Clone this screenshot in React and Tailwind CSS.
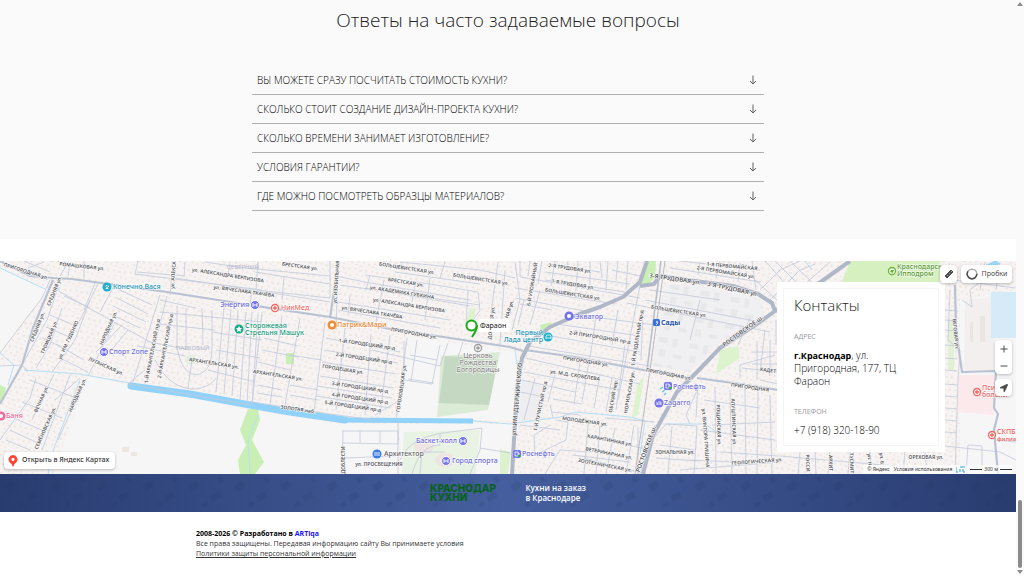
import React, { useState } from 'react';
import { FaLocationArrow } from 'react-icons/fa';

const QUESTIONS = [
  'Вы можете сразу посчитать стоимость кухни?',
  'Сколько стоит создание дизайн-проекта кухни?',
  'Сколько времени занимает изготовление?',
  'Условия гарантии?',
  'Где можно посмотреть образцы материалов?',
];

// thin residential streets
const STREETS = [
  // west
  'M0 353 42 298 50 280M0 366 22 365 28 372M53 280 60 292 150 342 190 350M58 288 47 320 22 365M84 310 95 283M100 312 115 284 122 292M120 290 152 305M117 298 148 314M113 306 146 322M110 314 140 328M90 300 75 340 52 372M62 308 50 345 36 368M98 284 80 320 66 340M64 296 90 308M50 315 76 326M46 327 72 338M42 338 68 350M115 322 88 376M122 325 96 352M128 330 110 352M56 344 84 360M60 358 88 372M36 378 30 398 0 440M30 380 76 398M54 374 32 420M70 375 42 450M80 378 55 400M22 402 62 418M14 418 46 432M10 430 40 444M6 440 30 450M84 382 58 440',
  'M133 382 160 295M145 384 167 296M137 346 185 356M160 300 196 308M177 306 177 348Q183 378 200 374Q212 370 212 348L212 310M186 308 186 350M202 308 203 345M158 324 215 330M192 360 188 388M155 360Q170 390 196 389Q212 386 216 378M145 370 128 384 250 405M224 308 216 392M231 309 224 394M238 310 232 396M246 312 240 400M252 312 247 404M258 314 252 405M160 312 262 322M212 332 262 340M216 350 260 358M208 370 255 382',
  // north west
  'M84 261 84 278M138 261 135 274 262 290M137 272 185 276M173 261 170 295M175 278 330 302M185 262 184 276M205 262 245 268 330 276M200 270 246 276M230 264 228 274M252 290 250 305M258 262 256 290 330 298M284 276 282 300M255 272 330 284M60 276 66 266 58 261M24 261 50 272M28 268 44 262M70 262 68 276',
  // block with Городецкие
  'M262 312 252 404M282 316 270 405M300 318 285 405M325 322 314 412M345 328 336 410M371 334 365 415M390 335 380 415M407 338 396 420M265 326 300 334M264 338 298 346M290 355 322 360M262 350 298 357M258 362 290 370M258 385 282 390M257 393 282 397M290 385 318 390M290 395 318 400M326 338 400 352M324 350 398 363M322 362 396 374M320 376 394 388M318 386 392 398M316 396 390 408M375 415 400 400M372 350 440 366 448 343M404 341 404 380 432 384 440 345M410 355 437 360M411 382 417 340M252 402 330 414 375 420M408 379 434 383',
  // north centre
  'M330 298 330 261M338 261 336 330M336 276 365 282 470 300M370 275 366 290M365 275 430 284 478 292M350 295 348 315M338 302 450 320M384 280 380 302M430 278 425 320M365 288 470 306M338 310 440 328M380 300 376 322M468 291 466 325 488 328M478 292 480 310 466 330M400 262 480 270 515 278M395 272 480 284M498 262 490 320M505 270 500 345M340 285 480 305M415 284 412 302M445 262 440 278M463 342 458 357M515 262 520 300 512 330',
  // north east of centre
  'M520 261 520 277 640 298M530 261 528 276M542 261 538 284M555 261 551 286M568 261 566 270M578 261 576 290M590 261 590 290M600 261 602 278M548 264 600 272M545 272 630 284M545 280 625 292M515 288 615 304M515 298 590 312M524 300 518 325M540 290 530 325M520 304 552 310M514 332 545 336M608 261 606 290M618 261 616 280M628 261 626 290M612 270 640 276',
  // Пригородный quarter
  'M556 324 640 336M596 316 592 345 582 402M540 334 640 352M528 346 650 366M618 310 612 345M525 358 640 384M524 372 620 390M555 374 548 402M580 362 574 404M600 374 594 408M522 380 575 392M520 392 540 396M535 378 524 420M625 345 616 410M612 378 606 412M553 399 582 404M552 412 580 415M645 300 760 322M643 310 641 360M627 303 770 332M593 317 655 325M640 285 618 400M650 290 720 300M700 300 690 340M556 420 568 422 566 440 535 455 534 435 550 425M553 418 550 405M520 425 560 430',
  // south centre
  'M588 424 584 474M588 436 650 450M584 458 646 474M600 425 596 474M615 428 606 474M545 474 560 450 588 452M634 425 626 474M572 455 630 462M655 425 640 474M512 450 545 455M605 418 655 422M638 427 638 474',
  'M652 440 666 424 697 426 694 474M672 426 668 474M690 424 686 415 700 384M660 445 695 450M656 458 698 461M698 385 696 418M715 387 716 474M730 390 732 474M745 388 746 474M758 392 757 474M704 400 760 408M700 430 775 440M712 425 775 422M720 452 778 456M680 470 780 462M740 378 740 365 775 355M765 330 760 372M742 368 778 372M770 395 772 474M776 320 776 345M690 460 735 462',
  // north east
  'M670 268 760 282M680 261 760 270M700 262 698 275M720 261 716 278M740 263 738 282M752 261 756 290M765 261 800 300M775 261 808 294M790 261 815 285M760 290 780 270 800 261M770 300 800 270 815 264M780 306 830 262M755 280 790 312M750 318 738 345M757 342 757 380M770 340 770 376M752 352 778 352M752 364 778 364M760 380 778 384',
  // east
  'M950 290 948 340 960 350 958 380 955 474M962 300 972 307 970 290 985 278M945 310 958 311M945 320 957 321M945 330 957 331M945 345 957 346M945 358 957 359M945 370 957 371M945 384 957 385M945 396 957 397M945 408 957 409M945 420 957 421M945 432 957 433M955 280 1015 288M985 262 980 290M1000 262 996 290M966 474 968 445 982 446 982 474M995 440 1016 442M780 456 940 470M800 452 798 474M815 452 816 474M830 452 828 474M850 452 848 474M870 452 872 474M905 452 903 474M925 452 927 474M945 446 1000 452 1016 460',
  // sport park
  'M343 430 342 474M343 431 398 431 398 444 343 443M360 431 360 443M380 431 380 443M398 422 398 474M400 460Q410 436 450 432L482 428 480 450 470 474M345 458 395 456M440 434 440 445Q420 445 412 474M480 448 510 453M420 474 422 452 445 452',
];

const AVENUES = [
  'M0 261 30 276 53 278 72 279 167 292 250 305 330 317 390 329 450 338 510 347 523 351',
  'M53 280 33 328 22 365 0 404',
  'M338 261 336 278 330 318',
  'M697 378 740 384 778 390',
  'M955 285 956 330 962 372 996 371 994 408 998 414 994 430 998 474',
  'M525 350 575 357 643 370 690 378',
];

const HIGHWAYS = [
  'M512 474 517 388 522 358 530 342 550 327 577 315 600 307 623 297 640 282 647 261',
  'M643 474 653 435 677 392 697 372 720 348 760 322 775 311 772 303 758 294 733 286 687 280 660 276 654 284 640 286',
  'M775 311 795 298 822 281 850 261',
];

// text, centre x, centre y, angle
const STREET_NAMES = [
  ['ПРИГОРОДНАЯ ул.', 26, 271, 17],
  ['РОМАШКОВАЯ ул.', 82, 266, 6],
  ['СРЕДНЯЯ ул.', 54, 291, -68],
  ['СРЕДНЯЯ ул.', 37, 327, -68],
  ['ТРОИЦКАЯ ул.', 49, 337, -67],
  ['ул. ИМ. ГУДЕНКО', 68, 340, -65],
  ['НАРОДНАЯ ул.', 108, 328, -66],
  ['НАРОДНАЯ ул.', 77, 395, -66],
  ['ВЕЧНАЯ ул.', 41, 399, -66],
  ['СЕМЁНОВСКАЯ ул.', 45, 428, -66],
  ['ЛУГАНСКАЯ ул.', 106, 366, 24],
  ['1-Й АРХАНГЕЛЬСКИЙ пр-д', 152, 351, -79],
  ['2-Й АРХАНГЕЛЬСКИЙ пр-д', 165, 346, -79],
  ['АРХАНГЕЛЬСКАЯ ул.', 214, 363, 9],
  ['АРХАНГЕЛЬСКАЯ ул.', 278, 375, 9],
  ['ул. АЛЕКСАНДРА БЕРЛИЗОВА', 228, 275, 9],
  ['ул. ВЯЧЕСЛАВА ТКАЧЁВА', 244, 291, 8],
  ['ул. АЛЕКСА', 173, 275, -86],
  ['БРЕСТСКАЯ ул.', 300, 266, 8],
  ['ул. ИЗОБИЛЬНАЯ', 336, 282, -86],
  ['БОЛЬШЕВИСТСКАЯ ул.', 407, 268, 9],
  ['БОЛЬШЕВИСТСКАЯ ул.', 481, 279, 9],
  ['БРЕСТСКАЯ ул.', 406, 282, 9],
  ['ул. АКАДЕМИКА ГУБКИНА', 402, 292, 9],
  ['ул. АЛЕКСАНДРА БЕРЛИЗОВА', 409, 305, 9],
  ['ул. ВЯЧЕСЛАВА ТКАЧЁВА', 372, 312, 9],
  ['ПРИГОРОДНАЯ ул.', 414, 333, 10],
  ['1-Й ГОРОДЕЦКИЙ пр-д', 367, 344, 8],
  ['2-Й ГОРОДЕЦКИЙ пр-д', 364, 358, 8],
  ['ГОРОДЕЦКАЯ ул.', 343, 369, 9],
  ['3-Й ГОРОДЕЦКИЙ пр-д', 360, 387, 8],
  ['4-Й ГОРОДЕЦКИЙ пр-д', 360, 398, 8],
  ['5-Й ГОРОДЕЦКИЙ пр-д', 353, 406, 8],
  ['ГОРОХОВЕЦКАЯ ул.', 401, 388, -82],
  ['ЗОЛОТАЯ наб.', 298, 409, 8],
  ['ул. ПРОСВЕЩЕНИЯ', 379, 464, 0],
  ['ДОБЛЕСТИ', 343, 460, -90],
  ['ДОНСКАЯ ул.', 491, 323, -84],
  ['НАЯ ул.', 509, 309, -72],
  ['6-Й УРОЖАЙНЫЙ', 532, 284, -80],
  ['2-Я ТРУДОВАЯ ул.', 570, 268, 8],
  ['1-Я ТРУДОВАЯ ул.', 573, 284, 9],
  ['БОЛЬШЕВИСТСКАЯ ул.', 573, 294, 9],
  ['БОЛЬШЕВИСТСКАЯ ул.', 679, 311, 9],
  ['1-Я ПЕРВОМАЙСКАЯ', 732, 266, 5],
  ['2-Я ПЕРВОМАЙСКАЯ ул.', 726, 272, 9],
  ['2-Й ПРИГОРОДНЫЙ пр-д', 600, 337, 9],
  ['1-Й РАЗДЕЛЬНЫЙ пр-д', 637, 338, -81],
  ['ПРИГОРОДНАЯ ул.', 586, 361, 9],
  ['ПРИГОРОДНАЯ ул.', 669, 374, 11],
  ['ПРИГОРОДНАЯ', 750, 387, 8],
  ['ул. М.Д. СКОБЕЛЕВА', 575, 375, 9],
  ['1-Й ЛУЧИСТЫЙ пр-д', 540, 406, -78],
  ['ОБСКИЙ пер.', 613, 396, -80],
  ['НОРИЛЬСКАЯ ул.', 629, 392, -80],
  ['МОЛОДЁЖНАЯ ул.', 585, 421, 8],
  ['КАРАНТИННАЯ ул.', 610, 440, 11],
  ['ВЕТЕРИНАРНАЯ ул.', 609, 453, 11],
  ['ЗООТЕХНИЧЕСКАЯ ул.', 605, 465, 11],
  ['ЗОНАЛЬНАЯ ул.', 675, 452, 0],
  ['ул. ВИКТОРА ГРИШИНА', 706, 438, 86],
  ['РОЩИНСКАЯ ул.', 719, 425, 88],
  ['АЛУШТИНСКАЯ ул.', 734, 422, 88],
  ['ГЕОЛОГИЧЕСКАЯ ул.', 757, 461, -4],
  ['КАДЕТ', 768, 370, 8],
  ['ОРЕХОВАЯ ул.', 926, 457, 0],
  ['РОССИ', 808, 463, 88],
  ['АРХИТ', 831, 463, 88],
  ['ТУСМИТ', 852, 463, 88],
  ['ул. Н.', 870, 460, 86],
  ['ул. Б.', 882, 459, 86],
  ['ВЕГОВАЯ ул.', 956, 334, 84],
];

const BIG_STREET_NAMES = [
  ['3-Я ТРУДОВАЯ ул.', 675, 279, 8],
  ['3-Я ТРУДОВАЯ ул.', 733, 289, 12],
  ['ул. ИМ. ДЗЕРЖИНСКОГО', 517, 399, -85],
  ['РОСТОВСКОЕ ш.', 743, 331, -36],
  ['РОСТОВСКОЕ ш.', 646, 449, -70],
];

function Building({ x, y, color }) {
  return (
    <g>
      <circle cx={x} cy={y} r="4.5" fill={color} stroke="#fff" strokeWidth="1" />
      <path d={`M${x - 2} ${y - 2}v4M${x + 2} ${y - 2}v4M${x - 2} ${y}h4`} stroke="#fff" strokeWidth="1" />
    </g>
  );
}

function Ring({ x, y, color }) {
  return (
    <g>
      <circle cx={x} cy={y} r="4.5" fill={color} />
      <circle cx={x} cy={y} r="2" fill="#fff" />
    </g>
  );
}

function Cross({ x, y, color }) {
  return (
    <g>
      <circle cx={x} cy={y} r="3.5" fill="#fff" stroke={color} strokeWidth="1.3" />
      <path d={`M${x - 2} ${y}h4M${x} ${y - 2}v4`} stroke={color} strokeWidth="1.3" />
    </g>
  );
}

function Fuel({ x, y }) {
  return (
    <g>
      <rect x={x - 4} y={y - 4} width="8" height="8" rx="2" fill="#7373ee" />
      <path d={`M${x - 2} ${y + 2}v-4h3v4zM${x + 1} ${y - 1}h1v3`} fill="none" stroke="#fff" strokeWidth="0.8" />
      <circle cx={x + 2} cy={y + 2} r="1.3" fill="#22b53a" />
    </g>
  );
}

function CityMap() {
  return (
    <svg viewBox="0 261 1016 213" preserveAspectRatio="xMidYMid slice" className="block w-full h-full" role="img" aria-label="Карта">
      <defs>
        <pattern id="houses" width="17" height="13" patternUnits="userSpaceOnUse" patternTransform="rotate(9)">
          <path d="M1 1h2v2h-2zM6 2h3v2h-3zM12 1h2v3h-2zM3 6h2v2h-2zM9 7h2v2h-2zM14 8h2v2h-2zM1 10h3v1h-3zM6 11h2v1h-2z" fill="#eee7e3" />
        </pattern>
        <pattern id="sheds" width="31" height="27" patternUnits="userSpaceOnUse" patternTransform="rotate(12)">
          <path d="M2 3h9v5h-9zM16 2h5v9h-5zM5 15h6v7h-6zM19 17h9v4h-9z" fill="#e8e7ea" />
        </pattern>
      </defs>
      <rect y="261" width="1016" height="213" fill="#f6f3f2" />
      <rect y="261" width="1016" height="213" fill="url(#houses)" />

      {/* open ground */}
      <g fill="#f7f6f6">
        <path d="M0 268 26 280 48 288 42 298 0 353z" />
        <path d="M88 376 128 385 250 410 340 424 398 424 398 474 53 474z" />
        <path d="M408 336 500 350 518 352 512 420 400 420z" />
        <path d="M960 300 1016 290 1016 474 960 474z" />
        <path d="M400 424 512 424 511 474 400 474z" />
        <path d="M0 365 20 362 0 402z" />
      </g>
      <path d="M665 285 690 284 760 298 765 318 720 342 690 372 652 366z" fill="#f0eff1" />
      <path d="M665 285 690 284 760 298 765 318 720 342 690 372 652 366z" fill="url(#sheds)" />
      <path d="M522 380 548 386 540 425 517 420z" fill="#eeedf0" />
      <path d="M965 300 994 297 994 370 964 370z" fill="#f2efee" />
      <path d="M958 375 995 375 994 415 958 412z" fill="#fbe9ec" />
      <path d="M970 322h3v20h-3zM980 316h5v26h-5z" fill="#eae5e3" />

      {/* parks */}
      <g fill="#c9efb4">
        <path d="M0 385 6 388 3 400 0 402z" />
        <path d="M248 409 258 409 260 420 252 440 264 462 255 474 240 474 238 460 246 445 240 430z" />
        <path d="M286 353h8v11h-8z" />
        <path d="M648 261 656 261 655 278 645 286 639 282z" />
        <path d="M540 325 552 322 548 330 541 331z" />
        <path d="M500 449 511 452 508 474 500 474z" opacity="0.6" />
      </g>
      <path d="M720 350 738 346 740 358 716 374z" fill="#dcf3ce" />
      <path d="M637 385 644 376 638 415 632 418z" fill="#dcf3ce" />
      <path d="M404 432 480 430 476 474 402 474z" fill="#e8f3e3" />
      <path d="M470 308 476 309 472 325 466 322z" fill="#dcf3ce" />
      <path d="M850 261 940 261 941 282 842 282z" fill="#d6f0bf" />
      <path d="M948 320h6v50h-6z" fill="#e0f1d6" />
      <path d="M441 356 500 352 488 410 437 417z" fill="#dcebd6" />
      <path d="M445 356 498 360 489 405 439 403z" fill="#c5d8c1" />
      <circle cx="191" cy="360" r="5" fill="#dfeedd" />
      <ellipse cx="424" cy="446" rx="10" ry="8" fill="#eee5e2" />
      <ellipse cx="445" cy="460" rx="10" ry="7" fill="#eee5e2" />
      <path d="M122 447h7v5h-7zM131 452h6v4h-6z" fill="#ece6e3" />

      {/* water */}
      <path d="M991 292h25v46h-25z" fill="#d5ebf7" />
      <path d="M982 267 996 260 1000 264 984 271z" fill="#9bd7f8" />
      <path d="M131 386 190 394 250 405 290 412 345 420" fill="none" stroke="#90d2f9" strokeWidth="7" strokeLinecap="round" />
      <path d="M340 420 473 421" fill="none" stroke="#90d2f9" strokeWidth="5" />
      <g fill="none" stroke="#b5dff6" strokeWidth="1">
        <path d="M473 421 510 424 560 417 575 412 630 417 645 421 640 455" />
        <path d="M0 353 14 365 8 385M24 370 80 374 130 383M80 380 54 448 48 474M258 415 248 440 250 474" />
        <path d="M0 268 45 289M515 350 518 370M665 424 705 424 722 436M805 261 812 270" />
      </g>

      {/* roads */}
      <g fill="none" stroke="#c2c9da" strokeWidth="0.8" strokeLinejoin="round">
        {STREETS.map((d) => <path key={d} d={d} />)}
      </g>
      <g fill="none" stroke="#b9c2d3" strokeWidth="2.2" strokeLinejoin="round">
        {AVENUES.map((d) => <path key={d} d={d} />)}
      </g>
      <g fill="none" stroke="#b0b8c8" strokeWidth="4" strokeLinejoin="round">
        {HIGHWAYS.map((d) => <path key={d} d={d} />)}
      </g>
      <path d="M661 261 647 370" stroke="#b9c0cd" strokeWidth="1.6" />
      <path d="M665 261 650 370 635 474" fill="none" stroke="#a9adb5" strokeWidth="0.8" />

      {/* street names */}
      <g className="font-['Noto_Sans',sans-serif] text-[5px] font-semibold" fill="#55555a" stroke="#fff" strokeWidth="1" paintOrder="stroke" textAnchor="middle" dominantBaseline="central">
        {STREET_NAMES.map(([text, x, y, angle], i) => (
          <text key={i} transform={`translate(${x} ${y}) rotate(${angle})`}>{text}</text>
        ))}
      </g>
      <g className="font-['Noto_Sans',sans-serif] text-[6px] font-semibold" fill="#55555a" stroke="#fff" strokeWidth="1" paintOrder="stroke" textAnchor="middle" dominantBaseline="central">
        {BIG_STREET_NAMES.map(([text, x, y, angle], i) => (
          <text key={i} transform={`translate(${x} ${y}) rotate(${angle})`}>{text}</text>
        ))}
      </g>
      <g className="font-['Noto_Sans',sans-serif] text-[6px]" fill="#b3b6cc">
        <text x="176" y="350">ПАРКОВЫЙ</text>
        <text x="227" y="269">СЕВЕРНЫЙ</text>
      </g>

      {/* places */}
      <g className="font-['Noto_Sans',sans-serif] text-[7px] font-medium" stroke="#fff" strokeWidth="1" paintOrder="stroke">
        <text x="113" y="289" fill="#1592b4">Конечно Вася</text>
        <text x="109" y="354" fill="#6a68dc">Спорт Zone</text>
        <text x="249" y="307" fill="#6a68dc" textAnchor="end">Энергия</text>
        <text x="281" y="310" fill="#ee6a66">НикМед</text>
        <text x="337" y="327" fill="#e8842c">Патрик&amp;Мари</text>
        <text x="245" y="328" fill="#12987a">Сторожевая</text>
        <text x="245" y="335" fill="#12987a">Стрельня Машук</text>
        <text x="6" y="418" fill="#e86191">Баня</text>
        <text x="575" y="319" fill="#6a68dc">Экватор</text>
        <text x="543" y="335" fill="#1592b4" textAnchor="end">Первый</text>
        <text x="543" y="342" fill="#1592b4" textAnchor="end">Лада центр</text>
        <text x="661" y="325" fill="#2655a8" className="font-bold">Сады</text>
        <text x="673" y="389" fill="#6a68dc">Роснефть</text>
        <text x="664" y="405" fill="#6a68dc">Zagarro</text>
        <text x="522" y="456" fill="#6a68dc">Роснефть</text>
        <text x="457" y="443" fill="#6a68dc" textAnchor="end">Баскет-холл</text>
        <text x="452" y="463" fill="#6a68dc">Город спорта</text>
        <text x="384" y="456" fill="#656565">Архитектор</text>
        <g fill="#858585" textAnchor="middle">
          <text x="478" y="358">Церковь</text>
          <text x="478" y="365">Рождества</text>
          <text x="478" y="372">Богородицы</text>
        </g>
        <text x="897" y="269" fill="#519426">Краснодарск</text>
        <text x="897" y="276" fill="#519426">Ипподром</text>
        <text x="982" y="390" fill="#ed625c">Психиа</text>
        <text x="982" y="397" fill="#ed625c">больни</text>
        <text x="997" y="434" fill="#ed625c">СКПБ</text>
      </g>
      <text x="997" y="441" className="font-['Noto_Sans',sans-serif] text-[6px] font-medium" fill="#ed625c">филиа</text>

      <Ring x={107} y={287} color="#1eb0cf" />
      <path d="M105 288q2-3 4 0M105 286h1M107 285h1" stroke="#1592b4" strokeWidth="1" fill="none" />
      <Building x={104} y={352} color="#7373ee" />
      <Building x={255} y={305} color="#7373ee" />
      <Building x={463} y={441} color="#7373ee" />
      <Building x={446} y={461} color="#7373ee" />
      <Cross x={275} y={308} color="#f1645f" />
      <Cross x={977} y={392} color="#f1645f" />
      <Cross x={992} y={435} color="#f1645f" />
      <Cross x={478} y={348} color="#9b9b9b" />
      <Ring x={332} y={325} color="#f08c36" />
      <circle cx="239" cy="329" r="4.5" fill="#17ab87" />
      <path d="m239 326 1 2 2 0-1.500 2 0.500 2-2-1-2 1 0.500-2-1.500-2 2 0z" fill="#fff" />
      <Ring x={1} y={416} color="#ed6d9c" />
      <Ring x={569} y={316} color="#7373ee" />
      <circle cx="548" cy="337" r="4.500" fill="#1eb0cf" />
      <path d="M546 338v-2l1-1h3l1 1v2zM546 338v1M551 338v1" stroke="#fff" strokeWidth="0.8" fill="none" />
      <rect x="653" y="319" width="7" height="7" rx="1.500" fill="#3972dd" />
      <path d="m658 321-2 1 2 1-2 2" stroke="#fff" strokeWidth="0.8" fill="none" />
      <Fuel x={668} y={386} />
      <Fuel x={517} y={454} />
      <path d="M660 389l3-2M662 392l3-2M664 395l2-2" stroke="#5fc9ee" strokeWidth="1.400" />
      <circle cx="659" cy="403" r="4.500" fill="#7373ee" />
      <path d="M657 405v-3M657 404h4v1M658 402h3v2" stroke="#fff" strokeWidth="0.8" fill="none" />
      <circle cx="377" cy="454" r="4.500" fill="#3a7be8" />
      <path d="M374 453h6M374 455h6" stroke="#fff" strokeWidth="0.9" />
      <circle cx="892" cy="271" r="3.500" fill="#fff" stroke="#68b43b" strokeWidth="1.300" />
      <path d="M890 272l1-2 3 0-1 3z" fill="#68b43b" />

      {/* our pin */}
      <rect x="478" y="319" width="32" height="13" rx="3" fill="#fff" opacity="0.95" />
      <path d="M477 325q0 5-5 12" fill="none" stroke="#19ad19" strokeWidth="2" />
      <circle cx="471.500" cy="325.500" r="5" fill="#fff" stroke="#19ad19" strokeWidth="2" />
      <text x="480" y="328" className="font-['Noto_Sans',sans-serif] text-[7px]" fill="#111">Фараон</text>
    </svg>
  );
}

function PatternBar() {
  return (
    <svg className="absolute inset-0 w-full h-full" aria-hidden="true">
      <defs>
        <pattern id="bar" width="46" height="38" patternUnits="userSpaceOnUse">
          <path d="M4 12l8-6 4 6-8 6zM26 22l9-5 3 6-9 5zM18 30l5-3 2 4-5 3zM33 4l4-2 3 5-4 2z" fill="#1f3160" opacity="0.14" />
        </pattern>
      </defs>
      <rect width="100%" height="100%" fill="url(#bar)" />
    </svg>
  );
}

const mapButton = 'bg-white rounded-sm shadow-[0_1px_3px_rgba(0,0,0,0.25)] flex items-center justify-center text-[#4d4d4d]';

export default function App() {
  const [opened, setOpened] = useState(null);

  return (
    <div className="flex h-screen overflow-hidden bg-[#fafafa] font-['Open_Sans',sans-serif] text-[#333]">
      <main className="flex-1 min-w-0 flex flex-col bg-white">
        <section className="bg-[#fafafa] pt-1.5 pb-7">
          <h2 className="text-center text-[19px] leading-7 font-light text-[#222]">Ответы на часто задаваемые вопросы</h2>
          <div className="mt-8 mx-auto w-full max-w-[512px]">
            {QUESTIONS.map((q, i) => (
              <button
                key={q}
                type="button"
                aria-expanded={opened === i}
                onClick={() => setOpened(opened === i ? null : i)}
                className="w-full h-[29px] px-[5px] flex items-center justify-between border-b border-[#b0b0b0] text-[10px] font-light text-black uppercase"
              >
                <span>{q}</span>
                <svg viewBox="0 0 8 10" className="w-2 h-2.5 mr-0.5" fill="none" stroke="#606060" strokeWidth="1">
                  <path d="M4 0.500v8.500M1 6l3 3 3-3" />
                </svg>
              </button>
            ))}
          </div>
        </section>

        <section className="relative mt-[22px] h-[213px] shrink-0 overflow-hidden">
          <CityMap />

          <div className="absolute right-[71px] top-[21px] w-[168px] bg-white p-1.5">
            <div className="border border-[#f5f5f5] px-2.5 pt-1.5 pb-2">
              <h3 className="text-[15px] leading-5 font-light text-[#222]">Контакты</h3>
              <p className="mt-4 text-[7px] leading-3 text-[#999] uppercase">Адрес</p>
              <p className="mt-1.5 text-[10px] leading-[13px] font-light text-black">
                <b className="font-bold text-[9px]">г.Краснодар</b>, ул.<br />Пригородная, 177, ТЦ<br />Фараон
              </p>
              <p className="mt-[18px] text-[7px] leading-3 text-[#999] uppercase">Телефон</p>
              <p className="mt-1.5 text-[10px] leading-[13px] font-light text-black">+7 (918) 320-18-90</p>
            </div>
          </div>

          <div className="absolute right-1 top-1 flex gap-1 font-['Noto_Sans',sans-serif]">
            <button type="button" aria-label="Линейка" className={`${mapButton} w-[17px] h-[18px]`}>
              <svg viewBox="0 0 12 12" className="w-3 h-3">
                <path d="M2 8 8 2 10 4 4 10z" fill="#4d4d4d" stroke="#4d4d4d" strokeLinejoin="round" />
                <path d="m4 7 1 1M6 5l1 1M8 3l1 1" stroke="#fff" strokeWidth="0.5" />
              </svg>
            </button>
            <button type="button" className={`${mapButton} h-[18px] w-[51px] gap-1 text-[7px]`}>
              <svg viewBox="0 0 12 12" className="w-3 h-3" fill="none" strokeWidth="1.500">
                <circle cx="6" cy="6" r="4.800" stroke="#aaa" />
                <path d="M2 3.300A4.800 4.800 0 1 0 10.800 6" stroke="#4d4d4d" />
              </svg>
              Пробки
            </button>
          </div>

          <div className="absolute right-1 top-[79px] flex flex-col gap-[5px]">
            <div className="bg-white rounded-sm shadow-[0_1px_3px_rgba(0,0,0,0.25)]">
              <button type="button" aria-label="Приблизить" className="w-[17px] h-[17px] flex items-center justify-center">
                <svg viewBox="0 0 8 8" className="w-2 h-2"><path d="M0.500 4h7M4 0.500v7" stroke="#4d4d4d" /></svg>
              </button>
              <button type="button" aria-label="Отдалить" className="w-[17px] h-[17px] flex items-center justify-center">
                <svg viewBox="0 0 8 8" className="w-2 h-2"><path d="M0.500 4h7" stroke="#4d4d4d" /></svg>
              </button>
            </div>
            <button type="button" aria-label="Моё местоположение" className={`${mapButton} w-[17px] h-[17px]`}>
              <FaLocationArrow className="w-2 h-2" />
            </button>
          </div>

          <a href="#map" className="absolute left-1 bottom-[5px] h-[17px] pl-1 pr-1.5 flex items-center gap-1 bg-white rounded-sm shadow-[0_1px_3px_rgba(0,0,0,0.25)] font-['Noto_Sans',sans-serif] text-[7px] font-medium">
            <svg viewBox="0 0 10 13" className="w-2.5 h-3">
              <path d="M5 0a4.800 4.800 0 0 0-3.400 8.200C3 9.600 4 10 4.300 12q.7 1.500 1.400 0C6 10 7 9.600 8.400 8.200A4.800 4.800 0 0 0 5 0z" fill="#f43" />
              <circle cx="5" cy="4.800" r="1.700" fill="#fff" />
            </svg>
            Открыть в Яндекс Картах
          </a>

          <div className="absolute right-1 bottom-0 h-[9px] pl-1 flex items-center gap-1 bg-white/70 font-['Noto_Sans',sans-serif] text-[5px] text-[#333]">
            <span>© Яндекс</span>
            <a href="#terms">Условия использования</a>
            <svg viewBox="0 0 10 7" className="w-2.5 h-[7px]"><path d="M0 1v5h2M4 1h5M4 3v3M7 3v3h2" stroke="#28a7ce" fill="none" /></svg>
            <span className="flex items-center gap-0.5">
              <i className="w-3 h-px bg-[#333]" />
              300 м
              <i className="w-3 h-px bg-[#333]" />
            </span>
          </div>
        </section>

        <section className="relative h-[38px] shrink-0 bg-linear-to-r from-[#293c70] via-[#455f9e] to-[#293c70]">
          <PatternBar />
          <div className="relative h-full mx-auto max-w-[156px] flex items-center justify-between">
            <div className="text-[10px] leading-[9px] font-extrabold font-['Inter',sans-serif] text-[#086119] uppercase">
              Краснодар<br />Кухни
            </div>
            <p className="text-[8px] leading-[10px] font-semibold text-white whitespace-nowrap">Кухни на заказ<br />в Краснодаре</p>
          </div>
        </section>

        <footer className="pl-[196px] pt-[17px] text-[7px] leading-[10px]">
          <p className="font-bold text-black">2008-2026 © Разработано в <a href="#artiqa" className="text-[#1b13f5]">ARTiqa</a></p>
          <p>Все права защищены. Передавая информацию сайту Вы принимаете условия</p>
          <a href="#policy" className="underline">Политики защиты персональной информации</a>
        </footer>
      </main>

      <aside className="w-2 shrink-0 py-0.5 flex flex-col items-center" aria-hidden="true">
        <svg viewBox="0 0 6 4" className="w-1.5 h-1"><path d="M3 0 6 4H0z" fill="#8b8b8b" /></svg>
        <i className="mt-auto mb-0.5 w-1 h-[68px] rounded-full bg-[#8b8b8b]" />
        <svg viewBox="0 0 6 4" className="w-1.5 h-1"><path d="M0 0h6L3 4z" fill="#8b8b8b" /></svg>
      </aside>
    </div>
  );
}
